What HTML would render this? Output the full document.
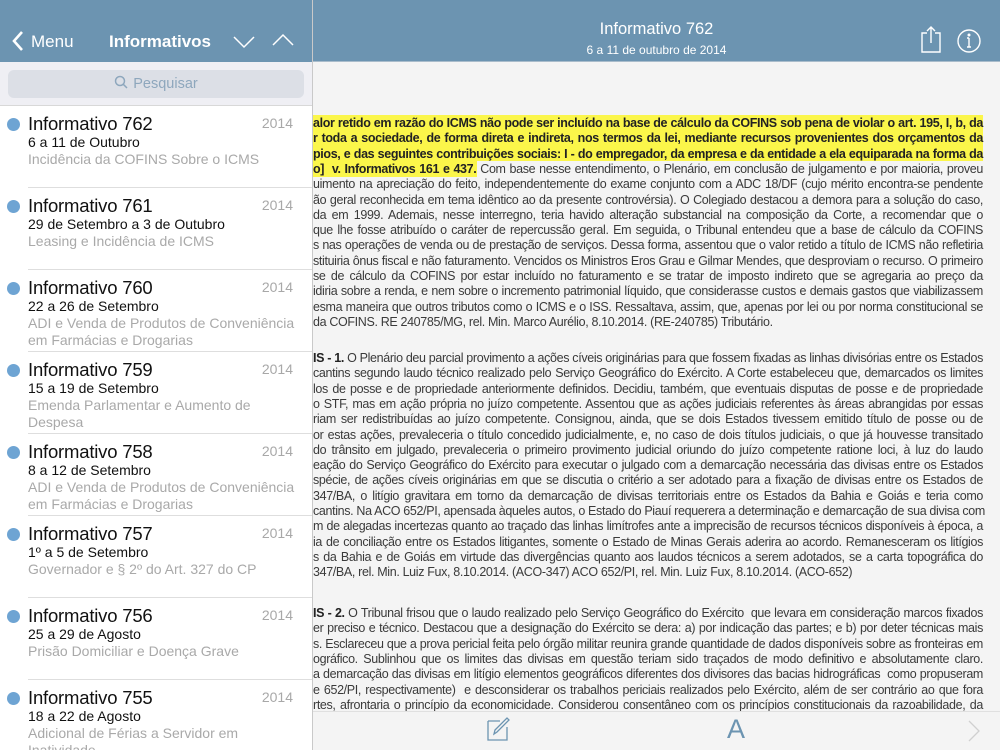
<!DOCTYPE html>
<html><head><meta charset="utf-8"><style>
*{margin:0;padding:0;box-sizing:border-box}
body{width:1000px;height:750px;overflow:hidden;position:relative;background:#f4f4f4;font-family:"Liberation Sans",sans-serif}
#hdr{position:absolute;left:0;top:0;width:1000px;height:62px;background:#6c94b1;border-bottom:1px solid #a9bccb}
#content{position:absolute;left:313px;top:63px;width:687px;height:648px;overflow:hidden;background:#f4f4f4}
.l{position:absolute;left:0;width:670px;font-size:12.5px;letter-spacing:-0.35px;color:#3a3a3a;white-space:nowrap;text-align:justify;text-align-last:justify;line-height:16px}
.n{text-align-last:left}
.hl{background:#fbf64a;font-weight:bold;color:#222;padding:0 0 0 0}
.y1{position:absolute;left:0;top:52px;width:670px;height:62px;background:#fbf64a}
.l b{color:#222}
#tb{position:absolute;left:313px;top:711px;width:687px;height:39px;background:#f4f4f4;border-top:1px solid #e0e0e0}
#side{position:absolute;left:0;top:0;width:313px;height:750px;border-right:1px solid #c9c9c9;background:#fff;overflow:hidden}
#side .top{height:62px;background:#6c94b1;position:relative;color:#fff}
#sb{height:44px;background:#efeff4;position:relative;border-bottom:1px solid #d8d8d8}
#sb div{position:absolute;left:8px;top:8px;width:296px;height:28px;background:#dcdfe6;border-radius:6px;text-align:center;color:#8ea7bd;font-size:14.5px;line-height:28px}
.row{position:relative;height:82px}
.row .dot{position:absolute;left:7px;top:12px;width:13px;height:13px;border-radius:50%;background:#6ea4d3}
.row .t{position:absolute;left:28px;top:7px;font-size:18.5px;color:#111;letter-spacing:-0.2px}
.row .y{position:absolute;right:19px;top:9px;font-size:14px;color:#a8a8a8}
.row .d{position:absolute;left:28px;top:28px;font-size:14px;color:#111}
.row .s{position:absolute;left:28px;top:45px;width:272px;font-size:14px;color:#a9a9a9;line-height:17px}
.row .sep{position:absolute;left:28px;right:0;bottom:0;border-bottom:1px solid #dedede}
</style></head><body>
<div id="hdr">
<div style="position:absolute;left:313px;width:687px;top:20px;text-align:center;color:#fff;font-size:16.5px">Informativo 762</div>
<div style="position:absolute;left:313px;width:687px;top:43px;text-align:center;color:#fff;font-size:12px">6 a 11 de outubro de 2014</div>
<svg style="position:absolute;left:918px;top:24px" width="26" height="30" viewBox="0 0 26 30" fill="none" stroke="#fff" stroke-width="1.4"><path d="M9 9H4v19h18V9h-5"/><path d="M13 3v16M9 7l4-4 4 4"/></svg>
<svg style="position:absolute;left:956px;top:28px" width="26" height="26" viewBox="0 0 26 26" fill="none" stroke="#fff" stroke-width="1.4"><circle cx="13" cy="13" r="11"/><path d="M13 10v9M11 10h2M11 19h4"/><circle cx="13" cy="7" r="0.8" fill="#fff"/></svg>
</div>
<div id="content">
<div class="y1"></div>
<div style="position:absolute;left:0;top:98px;width:164px;height:16px;background:#fbf64a"></div>
<div class="y1" style="top:98px;left:164px;width:506px;background:#f4f4f4;height:16px"></div>
<div class="l" style="top:52px"><span class="hl">alor retido em razão do ICMS não pode ser incluído na base de cálculo da COFINS sob pena de violar o art. 195, I, b, da</span></div>
<div class="l" style="top:67.3px"><span class="hl">r toda a sociedade, de forma direta e indireta, nos termos da lei, mediante recursos provenientes dos orçamentos da</span></div>
<div class="l" style="top:82.6px"><span class="hl">pios, e das seguintes contribuições sociais: I - do empregador, da empresa e da entidade a ela equiparada na forma da</span></div>
<div class="l" style="top:97.9px"><span class="hl">o]&nbsp; v. Informativos 161 e 437.</span> Com base nesse entendimento, o Plenário, em conclusão de julgamento e por maioria, proveu</div>
<div class="l" style="top:113.2px">uimento na apreciação do feito, independentemente do exame conjunto com a ADC 18/DF (cujo mérito encontra-se pendente</div>
<div class="l" style="top:128.5px">ão geral reconhecida em tema idêntico ao da presente controvérsia). O Colegiado destacou a demora para a solução do caso,</div>
<div class="l" style="top:143.8px">da em 1999. Ademais, nesse interregno, teria havido alteração substancial na composição da Corte, a recomendar que o</div>
<div class="l" style="top:159.1px">que lhe fosse atribuído o caráter de repercussão geral. Em seguida, o Tribunal entendeu que a base de cálculo da COFINS</div>
<div class="l" style="top:174.4px">s nas operações de venda ou de prestação de serviços. Dessa forma, assentou que o valor retido a título de ICMS não refletiria</div>
<div class="l" style="top:189.7px">stituiria ônus fiscal e não faturamento. Vencidos os Ministros Eros Grau e Gilmar Mendes, que desproviam o recurso. O primeiro</div>
<div class="l" style="top:205px">se de cálculo da COFINS por estar incluído no faturamento e se tratar de imposto indireto que se agregaria ao preço da</div>
<div class="l" style="top:220.3px">idiria sobre a renda, e nem sobre o incremento patrimonial líquido, que considerasse custos e demais gastos que viabilizassem</div>
<div class="l" style="top:235.6px">esma maneira que outros tributos como o ICMS e o ISS. Ressaltava, assim, que, apenas por lei ou por norma constitucional se</div>
<div class="l n" style="top:250.9px">da COFINS. RE 240785/MG, rel. Min. Marco Aurélio, 8.10.2014. (RE-240785) Tributário.</div>

<div class="l" style="top:287px"><b>IS - 1.</b> O Plenário deu parcial provimento a ações cíveis originárias para que fossem fixadas as linhas divisórias entre os Estados</div>
<div class="l" style="top:302.3px">cantins segundo laudo técnico realizado pelo Serviço Geográfico do Exército. A Corte estabeleceu que, demarcados os limites</div>
<div class="l" style="top:317.6px">los de posse e de propriedade anteriormente definidos. Decidiu, também, que eventuais disputas de posse e de propriedade</div>
<div class="l" style="top:332.9px">o STF, mas em ação própria no juízo competente. Assentou que as ações judiciais referentes às áreas abrangidas por essas</div>
<div class="l" style="top:348.2px">riam ser redistribuídas ao juízo competente. Consignou, ainda, que se dois Estados tivessem emitido título de posse ou de</div>
<div class="l" style="top:363.5px">or estas ações, prevaleceria o título concedido judicialmente, e, no caso de dois títulos judiciais, o que já houvesse transitado</div>
<div class="l" style="top:378.8px">do trânsito em julgado, prevaleceria o primeiro provimento judicial oriundo do juízo competente ratione loci, à luz do laudo</div>
<div class="l" style="top:394.1px">eação do Serviço Geográfico do Exército para executar o julgado com a demarcação necessária das divisas entre os Estados</div>
<div class="l" style="top:409.4px">spécie, de ações cíveis originárias em que se discutia o critério a ser adotado para a fixação de divisas entre os Estados de</div>
<div class="l" style="top:424.7px">347/BA, o litígio gravitara em torno da demarcação de divisas territoriais entre os Estados da Bahia e Goiás e teria como</div>
<div class="l" style="top:440px">cantins. Na ACO 652/PI, apensada àqueles autos, o Estado do Piauí requerera a determinação e demarcação de sua divisa com</div>
<div class="l" style="top:455.3px">m de alegadas incertezas quanto ao traçado das linhas limítrofes ante a imprecisão de recursos técnicos disponíveis à época, a</div>
<div class="l" style="top:470.6px">ia de conciliação entre os Estados litigantes, somente o Estado de Minas Gerais aderira ao acordo. Remanesceram os litígios</div>
<div class="l" style="top:485.9px">s da Bahia e de Goiás em virtude das divergências quanto aos laudos técnicos a serem adotados, se a carta topográfica do</div>
<div class="l n" style="top:501.2px">347/BA, rel. Min. Luiz Fux, 8.10.2014. (ACO-347) ACO 652/PI, rel. Min. Luiz Fux, 8.10.2014. (ACO-652)</div>

<div class="l" style="top:542px"><b>IS - 2.</b> O Tribunal frisou que o laudo realizado pelo Serviço Geográfico do Exército&nbsp; que levara em consideração marcos fixados</div>
<div class="l" style="top:557.3px">er preciso e técnico. Destacou que a designação do Exército se dera: a) por indicação das partes; e b) por deter técnicas mais</div>
<div class="l" style="top:572.6px">s. Esclareceu que a prova pericial feita pelo órgão militar reunira grande quantidade de dados disponíveis sobre as fronteiras em</div>
<div class="l" style="top:587.9px">ográfico. Sublinhou que os limites das divisas em questão teriam sido traçados de modo definitivo e absolutamente claro.</div>
<div class="l" style="top:603.2px">a demarcação das divisas em litígio elementos geográficos diferentes dos divisores das bacias hidrográficas&nbsp; como propuseram</div>
<div class="l" style="top:618.5px">e 652/PI, respectivamente)&nbsp; e desconsiderar os trabalhos periciais realizados pelo Exército, além de ser contrário ao que fora</div>
<div class="l" style="top:633.8px">rtes, afrontaria o princípio da economicidade. Considerou consentâneo com os princípios constitucionais da razoabilidade, da</div>
</div>
<div id="tb">
<svg style="position:absolute;left:173px;top:4px" width="26" height="26" viewBox="0 0 26 26" fill="none" stroke="#6c94b1" stroke-width="1.3"><path d="M2 5h12M2 5v19h19V11"/><path d="M8 18l1-4L21 2l2 2-12 12z"/></svg>
<div style="position:absolute;left:414px;top:2px;font-size:27px;color:#6c94b1">A</div>
<svg style="position:absolute;left:654px;top:7px" width="14" height="24" viewBox="0 0 14 24" fill="none" stroke="#d0d0d0" stroke-width="1.3"><path d="M2 2l10 10L2 22"/></svg>
</div>
<div id="side">
<div class="top">
<svg style="position:absolute;left:12px;top:31px" width="12" height="20" viewBox="0 0 12 20" fill="none" stroke="#fff" stroke-width="2.6"><path d="M10 1L2 10l8 9"/></svg>
<div style="position:absolute;left:31px;top:32px;font-size:17px">Menu</div>
<div style="position:absolute;left:109px;top:32px;font-size:17px;font-weight:bold">Informativos</div>
<svg style="position:absolute;left:233px;top:35px" width="22" height="14" viewBox="0 0 22 14" fill="none" stroke="#fff" stroke-width="1.5"><path d="M1 2l10 10L21 2"/></svg>
<svg style="position:absolute;left:272px;top:33px" width="22" height="14" viewBox="0 0 22 14" fill="none" stroke="#fff" stroke-width="1.5"><path d="M1 12L11 2l10 10"/></svg>
</div>
<div id="sb"><div><svg width="14" height="14" viewBox="0 0 14 14" fill="none" stroke="#8ea7bd" stroke-width="1.5" style="vertical-align:-1px;margin-right:5px"><circle cx="6" cy="6" r="4.5"/><path d="M9.3 9.3L13 13"/></svg>Pesquisar</div></div>
<div class="row"><div class="dot"></div><div class="t">Informativo 762</div><div class="y">2014</div><div class="d">6 a 11 de Outubro</div><div class="s">Incidência da COFINS Sobre o ICMS</div><div class="sep"></div></div>
<div class="row"><div class="dot"></div><div class="t">Informativo 761</div><div class="y">2014</div><div class="d">29 de Setembro a 3 de Outubro</div><div class="s">Leasing e Incidência de ICMS</div><div class="sep"></div></div>
<div class="row"><div class="dot"></div><div class="t">Informativo 760</div><div class="y">2014</div><div class="d">22 a 26 de Setembro</div><div class="s">ADI e Venda de Produtos de Conveniência em Farmácias e Drogarias</div><div class="sep"></div></div>
<div class="row"><div class="dot"></div><div class="t">Informativo 759</div><div class="y">2014</div><div class="d">15 a 19 de Setembro</div><div class="s">Emenda Parlamentar e Aumento de Despesa</div><div class="sep"></div></div>
<div class="row"><div class="dot"></div><div class="t">Informativo 758</div><div class="y">2014</div><div class="d">8 a 12 de Setembro</div><div class="s">ADI e Venda de Produtos de Conveniência em Farmácias e Drogarias</div><div class="sep"></div></div>
<div class="row"><div class="dot"></div><div class="t">Informativo 757</div><div class="y">2014</div><div class="d">1º a 5 de Setembro</div><div class="s">Governador e § 2º do Art. 327 do CP</div><div class="sep"></div></div>
<div class="row"><div class="dot"></div><div class="t">Informativo 756</div><div class="y">2014</div><div class="d">25 a 29 de Agosto</div><div class="s">Prisão Domiciliar e Doença Grave</div><div class="sep"></div></div>
<div class="row"><div class="dot"></div><div class="t">Informativo 755</div><div class="y">2014</div><div class="d">18 a 22 de Agosto</div><div class="s">Adicional de Férias a Servidor em Inatividade</div><div class="sep"></div></div>
</div>
</body></html>
